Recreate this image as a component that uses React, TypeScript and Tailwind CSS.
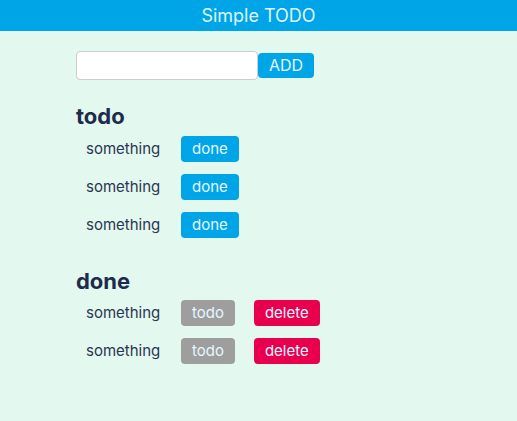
import React from "react";

const font = { fontFamily: "Inter, 'Noto Sans', sans-serif" };

function Btn({ label, color }: { label: string; color: string }) {
  return (
    <button className={`h-[26px] px-[11px] rounded-[4px] text-[15px] leading-[26px] text-[#e6f7ff] ${color}`}>
      {label}
    </button>
  );
}

export default function App() {
  const todos = ["something", "something", "something"];
  const dones = ["something", "something"];
  return (
    <div style={font} className="w-[517px] h-[421px] bg-[#e3f8ee] flex flex-col">
      <div className="h-[31px] bg-[#00a5e8] flex items-center justify-center text-[18px] text-[#dff5ff]">
        Simple TODO
      </div>
      <div className="pl-[76px] pt-[20px] flex flex-col">
        <div className="flex items-center">
          <input className="w-[182px] h-[29px] bg-white border border-[#cccccc] rounded-[4px]" />
          <button className="h-[25px] w-[56px] rounded-[4px] text-[16px] leading-[25px] text-[#e6f7ff] bg-[#00a5e8]">ADD</button>
        </div>
        <h2 className="mt-[23px] text-[22px] font-bold text-[#1d2b4c] leading-[26px]">todo</h2>
        <div className="flex flex-col gap-[12px] mt-[7px] pl-[10px]">
          {todos.map((t, i) => (
            <div key={i} className="flex items-center h-[26px]">
              <span className="w-[95px] text-[15px] text-[#2b3552]">{t}</span>
              <Btn label="done" color="bg-[#00a5e8]" />
            </div>
          ))}
        </div>
        <h2 className="mt-[30px] text-[22px] font-bold text-[#1d2b4c] leading-[26px]">done</h2>
        <div className="flex flex-col gap-[12px] mt-[6px] pl-[10px]">
          {dones.map((t, i) => (
            <div key={i} className="flex items-center h-[26px]">
              <span className="w-[95px] text-[15px] text-[#2b3552]">{t}</span>
              <Btn label="todo" color="bg-[#9e9e9e]" />
              <span className="w-[19px]" />
              <Btn label="delete" color="bg-[#e8004f]" />
            </div>
          ))}
        </div>
      </div>
    </div>
  );
}
